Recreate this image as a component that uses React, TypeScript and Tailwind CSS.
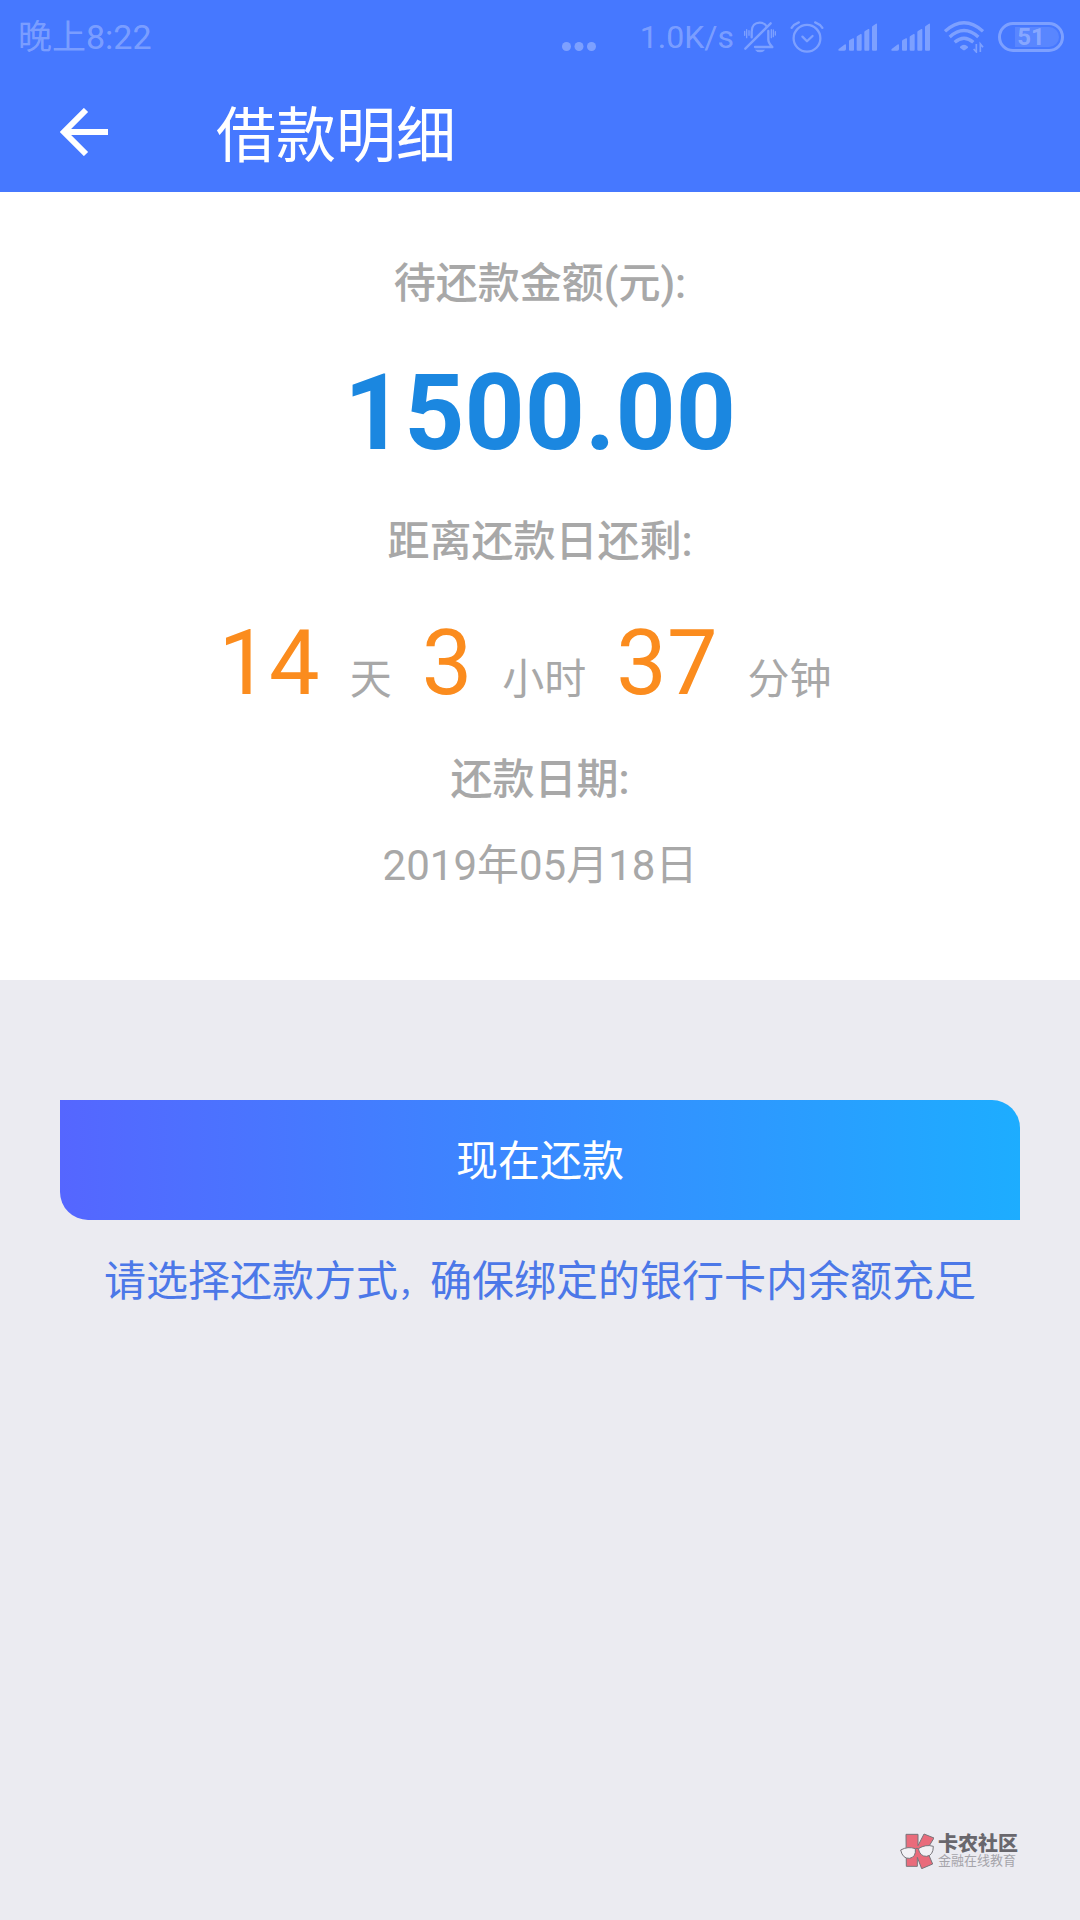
import React from 'react';

const countdown = [
    { value: '14', unit: '天' },
    { value: '3', unit: '小时' },
    { value: '37', unit: '分钟' },
];

const MutedBell = () => (
    <svg viewBox="0 0 96 96" className="w-8 h-8" fill="none" stroke="currentColor" strokeWidth="7" strokeLinecap="round" strokeLinejoin="round">
        <path d="M23 49V32C23 14 34 5 47 5c10 0 17 4 21 11M73 30v26c0 9 5 14 12 22H33M80 7 4 83" />
        <path d="M33 86h30q-5 8-15 8t-15-8z" fill="currentColor" stroke="none" />
        <path d="M2 31v12M8 26v24M15 29v14M82 26v24M88 27v20M94 32v10" strokeWidth="4" />
    </svg>
);

const AlarmClock = () => (
    <svg viewBox="0 0 102 98" className="w-[34px] h-8" fill="none" stroke="currentColor" strokeWidth="7" strokeLinecap="round" strokeLinejoin="round">
        <circle cx="51" cy="53" r="41" />
        <path d="m37 48 14 14 17-16" />
        <path d="M4 21Q12 9 26 4M76 4q14 5 22 17" />
    </svg>
);

const Signal = () => (
    <svg viewBox="0 0 117 84" className="w-[39px] h-7" fill="currentColor">
        <path d="M3 77 19 65q5-3 5 2v11q0 5-5 5H4q-6-1-1-6z" />
        <path d="M33 54q0-2 2-3l10-5q3-1 3 2v32q0 3-3 3h-9q-3 0-3-3z" />
        <path d="M56 42q0-2 2-3l10-6q3-1 3 2v45q0 3-3 3h-9q-3 0-3-3z" />
        <path d="M79 27q0-2 2-3l10-6q3-1 3 2v60q0 3-3 3h-9q-3 0-3-3z" />
        <path d="M102 12q0-2 2-3l10-7q3-1 3 2v76q0 3-3 3h-9q-3 0-3-3z" />
    </svg>
);

const Wifi = () => (
    <svg viewBox="0 0 120 96" className="w-10 h-8" fill="none" stroke="currentColor" strokeWidth="10">
        <path d="M3 31Q60-20 117 31" />
        <path d="M17 48Q60 9 103 48" />
        <path d="M32 64Q60 39 88 64" />
        <path d="M48 77q12-11 24 0v3L62 88h-4L48 80z" fill="currentColor" stroke="none" />
        <path d="M97 69v24l-8-9M109 93V69l8 10" strokeWidth="5" />
    </svg>
);

const BackArrow = () => (
    <svg viewBox="0 0 48 48" className="w-12 h-12" fill="none" stroke="currentColor" strokeWidth="6">
        <path d="M26 2 4 24l22 22M4 24h44" />
    </svg>
);

const BrandMark = () => (
    <svg viewBox="0 0 102 108" className="w-[34px] h-9" stroke="#77757b" strokeWidth="3" strokeLinejoin="round">
        <path d="M18 4h36v34L72 3l30 12-22 36 18 42-33 14-13-34v27H19z" fill="#e96b7b" />
        <path d="M2 51q22-12 44-4 3 25-17 29Q8 78 2 51zM55 47q22-14 45-7 0 27-20 30-20 1-25-23z" fill="#f2f1f5" />
        <path d="M46 48q5-4 9-1" fill="none" />
    </svg>
);

export default function App() {
    return (
        <div className="relative min-h-screen bg-[#ebebf1] font-[Roboto,'Noto_Sans_CJK_SC',sans-serif]">
            <header className="bg-[#4678ff] text-white">
                <div className="flex items-center justify-between h-[72px] pt-[2px] pl-[18px] pr-4 text-[34px] leading-[70px] text-white/30">
                    <span>晚上8:22</span>
                    <div className="flex items-center">
                        <svg viewBox="0 0 34 9" className="w-[34px] h-[9px] mr-11 mt-[18px]" fill="currentColor">
                            <circle cx="4.5" cy="4.5" r="4.5" />
                            <circle cx="17" cy="4.5" r="4.5" />
                            <circle cx="29.5" cy="4.5" r="4.5" />
                        </svg>
                        <span className="mr-[10px] text-[32px]">1.0K/s</span>
                        <div className="flex items-center gap-[14px]">
                            <MutedBell />
                            <AlarmClock />
                            <Signal />
                            <Signal />
                            <Wifi />
                            <div className="relative flex items-center justify-center w-[66px] h-[30px] border-[3px] border-current rounded-full">
                                <div className="absolute inset-y-[2px] left-[14px] right-[2px] rounded-r-full bg-white/10"></div>
                                <span className="text-[24px] leading-6 font-bold">51</span>
                            </div>
                        </div>
                    </div>
                </div>
                <div className="flex items-center h-[120px] px-[60px]">
                    <button type="button" aria-label="返回" className="mr-[108px]">
                        <BackArrow />
                    </button>
                    <h1 className="pt-[10px] text-[60px] leading-[72px]">借款明细</h1>
                </div>
            </header>

            <main>
                <section className="bg-white pt-[62px] pb-[84px] text-center text-[42px] leading-[60px] text-[#a8a8a8]">
                    <h2 className="font-medium">待还款金额(元):</h2>
                    <p className="mt-10 text-[105px] leading-[120px] font-bold text-[#1b87e0]">1500.00</p>
                    <h2 className="mt-[38px] font-medium">距离还款日还剩:</h2>
                    <div className="flex items-baseline justify-center mt-[38px]">
                        {countdown.map(({ value, unit }) => (
                            <React.Fragment key={unit}>
                                <span className="mr-[30px] text-[90px] leading-[108px] text-[#fb8c1e]">{value}</span>
                                <span className="mr-[30px]">{unit}</span>
                            </React.Fragment>
                        ))}
                    </div>
                    <h2 className="mt-8 font-medium">还款日期:</h2>
                    <p className="mt-[26px]">2019年05月18日</p>
                </section>

                <section className="px-[60px] pt-[120px] text-center text-[42px] leading-[60px]">
                    <button type="button" className="block w-full h-[120px] pt-1 rounded-tr-[28px] rounded-bl-[28px] bg-linear-to-r/srgb from-[#5566ff] to-[#1dadff] text-white">
                        现在还款
                    </button>
                    <p className="mt-8 text-[#4c78e8]">
                        请选择还款方式<span className="text-[32px]">，</span>确保绑定的银行卡内余额充足
                    </p>
                </section>
            </main>

            <div className="absolute right-[62px] bottom-[51px] flex items-center gap-1">
                <BrandMark />
                <div>
                    <p className="text-[20px] leading-[20px] font-black text-[#69676d]">卡农社区</p>
                    <p className="text-[13px] leading-[14px] text-[#a5a4aa]">金融在线教育</p>
                </div>
            </div>
        </div>
    );
}
